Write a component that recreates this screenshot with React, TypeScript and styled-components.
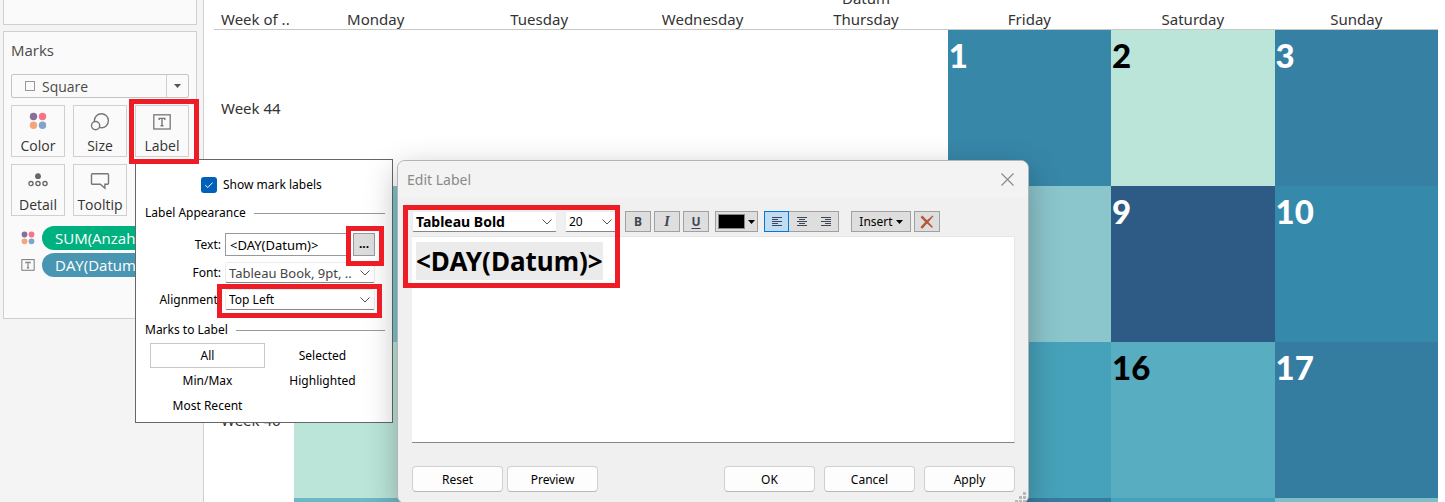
import React from "react";
import styled, { createGlobalStyle, css } from "styled-components";

const GlobalStyle = createGlobalStyle`
  *, *::before, *::after { box-sizing: border-box; }
  html, body { margin: 0; }
  body { font-family: "Noto Sans", sans-serif; font-size: 12px; color: #000; background: #fff; overflow: hidden; }
  button, input, select { font: inherit; color: inherit; margin: 0; }
`;

const Workspace = styled.div`
  position: relative;
  display: flex;
  height: 100vh;
  overflow: hidden;
`;

/* ---------- side bar ---------- */

const Sidebar = styled.aside`
  flex: none;
  width: 204px;
  padding: 0 6px 0 3px;
  background: #f4f4f4;
  border-right: 1px solid #d0d0d0;
  font-family: "Open Sans", sans-serif;
  font-size: 14px;
  color: #333;
`;

const Card = styled.section`
  border: 1px solid #d0d0d0;
  background: #fafafa;
`;

const FiltersCard = styled(Card)`
  height: 25px;
  border-top: 0;
`;

const MarksCard = styled(Card)`
  height: 288px;
  margin-top: 6px;
  padding: 8px 7px;
`;

const CardTitle = styled.h2`
  margin: 0 0 14px;
  font-size: 15px;
  line-height: 20px;
  font-weight: 400;
  color: #4a4a4a;
`;

const MarkType = styled.div`
  display: flex;
  align-items: center;
  position: relative;
  height: 24px;
  border: 1px solid #c4c4c4;
  border-radius: 2px;
  background: #fafafa;

  svg { position: absolute; pointer-events: none; }
  svg:first-of-type { left: 13px; }
  svg:last-of-type { right: 0; }
`;

const MarkTypeSelect = styled.select`
  flex: 1;
  height: 22px;
  padding: 0 30px;
  border: 0;
  background: none;
  appearance: none;
  color: #4a4a4a;
`;

const MarkGrid = styled.div`
  display: grid;
  grid-template-columns: repeat(3, 1fr);
  gap: 7px 8px;
  margin-top: 7px;
`;

const MarkCell = styled.div`
  position: relative;
`;

const MarkButton = styled.button`
  display: flex;
  flex-direction: column;
  align-items: center;
  justify-content: space-between;
  width: 100%;
  height: 52px;
  padding: 6px 0 0;
  border: 1px solid #d0d0d0;
  background: #fafafa;
  line-height: 20px;
`;

const ShelfRow = styled.div`
  display: flex;
  align-items: center;
  gap: 7px;
  height: 24px;
  margin: 10px 0 3px;
  padding-left: 10px;

  & + & { margin-top: 0; }
`;

const Pill = styled.button<{ $color: string }>`
  flex: 1;
  min-width: 0;
  height: 24px;
  padding: 0 13px;
  border: 0;
  border-radius: 12px;
  background: ${(p) => p.$color};
  color: #fff;
  font-size: 15px;
  line-height: 24px;
  text-align: left;
  white-space: nowrap;
  overflow: hidden;
`;

/* ---------- calendar sheet ---------- */

const Sheet = styled.main`
  flex: 1;
  min-width: 0;
  padding: 0 7px 0 10px;
  overflow: hidden;
`;

const Calendar = styled.table`
  width: 100%;
  margin-top: -13px;
  border-collapse: collapse;
  table-layout: fixed;
  font-size: 15px;
  line-height: 20px;
  color: #333;
`;

const WeekColumn = styled.col`
  width: 80px;
`;

const HeadCell = styled.th`
  height: 22px;
  padding: 0;
  font-weight: 400;
  text-align: center;
`;

const DayHead = styled(HeadCell)`
  height: 20px;
  border-bottom: 1px solid #c8c8c8;
`;

const WeekHead = styled(DayHead)`
  padding-left: 7px;
  text-align: left;
  white-space: nowrap;
`;

const WeekCell = styled.th`
  height: 156px;
  padding: 0 0 0 7px;
  font-weight: 400;
  text-align: left;
`;

const DayCell = styled.td<{ $fill?: string; $dark?: boolean }>`
  padding: 6px 1px;
  vertical-align: top;
  background: ${(p) => p.$fill ?? "transparent"};
  color: ${(p) => (p.$dark ? "#000" : "#fff")};
  font-family: Lato, sans-serif;
  font-size: 33px;
  font-weight: 900;
  line-height: 38px;
`;

/* ---------- shared overlay parts ---------- */

const Marker = styled.div<{ $edges: string }>`
  position: absolute;
  inset: ${(p) => p.$edges};
  border: 5px solid #ee1c24;
  z-index: 5;
  pointer-events: none;
`;

const Picker = styled.div<{ $width: string }>`
  position: relative;
  width: ${(p) => p.$width};

  svg { position: absolute; right: 5px; top: 8px; pointer-events: none; }
`;

const PickerSelect = styled.select<{ $bold?: boolean; $muted?: boolean }>`
  display: block;
  width: 100%;
  height: 21px;
  padding: 0 3px;
  border: 1px solid #ececec;
  border-bottom-color: #868686;
  border-radius: 2px;
  background: #fff;
  appearance: none;
  ${(p) => p.$bold && css`font-size: 14px; font-weight: 700;`}
  ${(p) => p.$muted && css`font-size: 13px; color: #444;`}
`;

/* ---------- label popup ---------- */

const Popup = styled.section`
  position: absolute;
  left: 135px;
  top: 159px;
  width: 258px;
  height: 264px;
  padding: 17px 7px 0 9px;
  border: 1px solid #666;
  background: #fff;
  line-height: 16px;
`;

const CheckLabel = styled.label`
  display: flex;
  align-items: center;
  gap: 6px;
  height: 16px;
  margin-left: 56px;
`;

const CheckBox = styled.input`
  appearance: none;
  width: 16px;
  height: 16px;
  border-radius: 3px;
  background: #005fb8;
`;

const CheckWrap = styled.span`
  position: relative;
  display: flex;

  svg { position: absolute; left: 4px; top: 4px; pointer-events: none; }
`;

const GroupTitle = styled.h3`
  display: flex;
  align-items: center;
  gap: 8px;
  margin: 0;
  padding-top: 12px;
  font-size: 12px;
  font-weight: 400;

  &::after { content: ""; flex: 1; height: 1px; background: #999; }
`;

const Fields = styled.div`
  display: grid;
  grid-template-columns: 76px 150px;
  align-items: center;
  gap: 6px 4px;
  margin-top: 12px;
`;

const FieldLabel = styled.label`
  text-align: right;
`;

const TextField = styled.div`
  display: flex;
  gap: 5px;
  height: 23px;
`;

const TextInput = styled.input`
  flex: 1;
  min-width: 0;
  padding: 0 4px;
  border: 1px solid #999;
  background: #fff;
  font-size: 13px;
`;

const MoreButton = styled.button`
  width: 22px;
  height: 23px;
  padding: 0 0 2px;
  border: 1px solid #999;
  background: #dcdcdc;
  font-weight: 700;
`;

const MoreWrap = styled.div`
  position: relative;
`;

const ChoiceGrid = styled.div`
  display: grid;
  grid-template-columns: 115px 115px;
  margin: 5px 0 0 5px;
`;

const Choice = styled.button<{ $active?: boolean }>`
  height: 25px;
  padding: 0;
  border: 1px solid ${(p) => (p.$active ? "#c8c8c8" : "transparent")};
  background: none;
`;

/* ---------- edit dialog ---------- */

const Dialog = styled.section`
  position: absolute;
  left: 397px;
  top: 160px;
  width: 632px;
  height: 344px;
  border: 1px solid #b4b4b4;
  border-radius: 8px;
  background: #f0f0f0;
  box-shadow: 0 10px 32px rgba(0, 0, 0, 0.28);
`;

const TitleBar = styled.header`
  display: flex;
  align-items: center;
  justify-content: space-between;
  height: 37px;
  padding: 0 14px 0 9px;
  border-radius: 7px 7px 0 0;
  background: #f3f3f3;
  color: #8a8a8a;
`;

const DialogTitle = styled.h1`
  margin: 0;
  font-size: 14px;
  font-weight: 400;
`;

const CloseButton = styled.button`
  display: flex;
  padding: 0;
  border: 0;
  background: none;
`;

const DialogBody = styled.div`
  padding: 13px 13px 0 14px;
`;

const Toolbar = styled.div`
  display: flex;
  height: 21px;
`;

const ToolGroup = styled.div<{ $before: number; $gap?: number }>`
  display: flex;
  gap: ${(p) => p.$gap ?? 0}px;
  margin-left: ${(p) => p.$before}px;
`;

const ToolButton = styled.button<{ $width: number }>`
  display: flex;
  align-items: center;
  justify-content: center;
  gap: 3px;
  width: ${(p) => p.$width}px;
  height: 21px;
  padding: 0;
  border: 1px solid #a0a0a0;
  background: #dedede;
`;

const Glyph = styled.span<{ $kind: "bold" | "italic" | "underline" }>`
  color: #3c4657;
  font-weight: 700;
  ${(p) => p.$kind === "italic" && css`font-family: "Liberation Serif", serif; font-style: italic; font-size: 14px;`}
  ${(p) => p.$kind === "underline" && css`text-decoration: underline; text-underline-offset: 2px;`}
`;

const AlignButton = styled(ToolButton)<{ $active?: boolean }>`
  border-width: 1px 0;
  &:last-child { border-right-width: 1px; }
  ${(p) => p.$active && css`
    border: 1px solid #0078d7;
    background: #c0dcf3;
  `}
`;

const Swatch = styled.span`
  width: 27px;
  height: 15px;
  border: 1px solid #888;
  background: #000;
`;

const Editor = styled.div`
  height: 207px;
  margin-top: 4px;
  padding: 5px 4px;
  border: 1px solid #e6e6e6;
  border-left: 0;
  border-bottom-color: #868686;
  background: #fff;
  font-size: 26px;
  font-weight: 700;
  line-height: 38px;
  outline: 0;
`;

const Selection = styled.span`
  display: inline-block;
  background: #ebebeb;
`;

const Footer = styled.footer`
  display: flex;
  justify-content: space-between;
  margin-top: 23px;
`;

const ButtonRow = styled.div<{ $gap: number }>`
  display: flex;
  gap: ${(p) => p.$gap}px;
`;

const DialogButton = styled.button`
  width: 91px;
  height: 26px;
  padding: 0;
  border: 1px solid #d0d0d0;
  border-bottom-color: #b8b8b8;
  border-radius: 4px;
  background: #fdfdfd;
`;

const Grip = styled.svg`
  position: absolute;
  right: 2px;
  bottom: 0;
`;

/* ---------- icons ---------- */

const Chevron = () => (
  <svg width="10" height="6" viewBox="0 0 10 6" fill="none" stroke="#555">
    <path d="M.5.5 5 5 9.5.5" />
  </svg>
);

const Caret = () => (
  <svg width="7" height="4" viewBox="0 0 7 4"><path d="M0 0h7L3.5 4z" fill="#000" /></svg>
);

const ColorIcon = ({ size }: { size: number }) => (
  <svg width={size} height={size} viewBox="0 0 18 18">
    <circle cx="4.5" cy="4.5" r="3.7" fill="#86709a" />
    <circle cx="13.5" cy="4.5" r="3.7" fill="#fb7185" />
    <circle cx="4.5" cy="13.3" r="3.7" fill="#f5a57a" />
    <circle cx="13.5" cy="13.3" r="3.7" fill="#7fa3cb" />
  </svg>
);

const SizeIcon = () => (
  <svg width="20" height="20" viewBox="0 0 20 20" fill="none" stroke="#777" strokeWidth="1.4">
    <circle cx="11.4" cy="8.8" r="7" />
    <circle cx="5.6" cy="13.6" r="4.1" fill="#fafafa" />
  </svg>
);

const LabelIcon = ({ width }: { width: number }) => (
  <svg width={width} height={width === 18 ? 20 : 12} viewBox="0 0 18 16" fill="none" stroke="#777" strokeWidth="1.3">
    <rect x=".8" y=".8" width="16.4" height="14.2" />
    <path d="M6.2 6V4.4h5.6V6M9 4.4v7.4M7.5 11.8h3" strokeWidth="1.4" />
  </svg>
);

const DetailIcon = () => (
  <svg width="20" height="18" viewBox="0 0 20 18" fill="none" stroke="#666" strokeWidth="1.3">
    <circle cx="10" cy="5.2" r="2.9" fill="#666" stroke="none" />
    <circle cx="3" cy="12.6" r="2.1" />
    <circle cx="10" cy="12.6" r="2.1" />
    <circle cx="17" cy="12.6" r="2.1" />
  </svg>
);

const TooltipIcon = () => (
  <svg width="20" height="20" viewBox="0 0 20 20" fill="none" stroke="#777" strokeWidth="1.4">
    <path d="M2.5 2.7h15a1 1 0 0 1 1 1v8.6a1 1 0 0 1-1 1h-2.6v4l-4.6-4H2.5a1 1 0 0 1-1-1V3.7a1 1 0 0 1 1-1z" />
  </svg>
);

const AlignIcon = ({ side }: { side: "left" | "center" | "right" }) => {
  const widths = [10, 6, 10, 6, 10];
  return (
    <svg width="10" height="9" viewBox="0 0 10 9" fill="#3c4657">
      {widths.map((w, i) => (
        <rect key={i} x={side === "left" ? 0 : side === "right" ? 10 - w : (10 - w) / 2} y={i * 2} width={w} height="1" />
      ))}
    </svg>
  );
};

/* ---------- data ---------- */

type Day = { fill: string; day?: string; dark?: boolean } | null;

const DAYS = ["Monday", "Tuesday", "Wednesday", "Thursday", "Friday", "Saturday", "Sunday"];

const WEEKS: { name: string; days: Day[] }[] = [
  {
    name: "Week 44",
    days: [null, null, null, null, { fill: "#3787a9", day: "1" }, { fill: "#bbe5d9", day: "2", dark: true }, { fill: "#3580a3", day: "3" }],
  },
  {
    name: "Week 45",
    days: [
      { fill: "#7fc3cc" }, { fill: "#7fc3cc" }, { fill: "#7fc3cc" }, { fill: "#7fc3cc" }, { fill: "#8bc6cd" },
      { fill: "#2d5b86", day: "9" }, { fill: "#3589aa", day: "10" },
    ],
  },
  {
    name: "Week 46",
    days: [
      { fill: "#bbe5d9" }, { fill: "#59adc1" }, { fill: "#59adc1" }, { fill: "#59adc1" }, { fill: "#46a2ba" },
      { fill: "#59adc1", day: "16", dark: true }, { fill: "#347ca0", day: "17" },
    ],
  },
  {
    name: "Week 47",
    days: [
      { fill: "#6db7c6" }, { fill: "#6db7c6" }, { fill: "#6db7c6" }, { fill: "#6db7c6" }, { fill: "#347ca0" },
      { fill: "#46a2ba" }, { fill: "#7cbfc8" },
    ],
  },
];

const MARKS = [
  { name: "Color", icon: <ColorIcon size={18} /> },
  { name: "Size", icon: <SizeIcon /> },
  { name: "Label", icon: <LabelIcon width={18} />, marked: true },
  { name: "Detail", icon: <DetailIcon /> },
  { name: "Tooltip", icon: <TooltipIcon /> },
];

const CHOICES = ["All", "Selected", "Min/Max", "Highlighted", "Most Recent"];

/* ---------- sections ---------- */

const MarksPanel = () => (
  <Sidebar>
    <FiltersCard />
    <MarksCard>
      <CardTitle>Marks</CardTitle>
      <MarkType>
        <svg width="10" height="10" viewBox="0 0 10 10"><rect x=".5" y=".5" width="9" height="9" fill="none" stroke="#999" /></svg>
        <MarkTypeSelect aria-label="Mark type"><option>Square</option></MarkTypeSelect>
        <svg width="22" height="22" viewBox="0 0 22 22">
          <path d="M.5 0v22" stroke="#d0d0d0" />
          <path d="M8 9h7l-3.5 4z" fill="#555" />
        </svg>
      </MarkType>
      <MarkGrid>
        {MARKS.map((m) => (
          <MarkCell key={m.name}>
            <MarkButton>{m.icon}{m.name}</MarkButton>
            {m.marked && <Marker $edges="-6px -10px -7px -6px" />}
          </MarkCell>
        ))}
      </MarkGrid>
      <ShelfRow><ColorIcon size={14} /><Pill $color="#00b180">SUM(Anzahl)</Pill></ShelfRow>
      <ShelfRow><LabelIcon width={14} /><Pill $color="#4996b2">DAY(Datum)</Pill></ShelfRow>
    </MarksCard>
  </Sidebar>
);

const CalendarSheet = () => (
  <Sheet>
    <Calendar>
      <colgroup>
        <WeekColumn />
        {DAYS.map((d) => <col key={d} />)}
      </colgroup>
      <thead>
        <tr><HeadCell /><HeadCell colSpan={7}>Datum</HeadCell></tr>
        <tr>
          <WeekHead scope="col">Week of ..</WeekHead>
          {DAYS.map((d) => <DayHead scope="col" key={d}>{d}</DayHead>)}
        </tr>
      </thead>
      <tbody>
        {WEEKS.map((w) => (
          <tr key={w.name}>
            <WeekCell scope="row">{w.name}</WeekCell>
            {w.days.map((d, i) => <DayCell key={i} $fill={d?.fill} $dark={d?.dark}>{d?.day}</DayCell>)}
          </tr>
        ))}
      </tbody>
    </Calendar>
  </Sheet>
);

const LabelPopup = () => (
  <Popup>
    <CheckLabel>
      <CheckWrap>
        <CheckBox type="checkbox" defaultChecked />
        <svg width="8" height="8" viewBox="0 0 8 8" fill="none" stroke="#fff"><path d="M.3 4.2 2.8 6.5 7.7 1.5" /></svg>
      </CheckWrap>
      Show mark labels
    </CheckLabel>
    <GroupTitle>Label Appearance</GroupTitle>
    <Fields>
      <FieldLabel htmlFor="label-text">Text:</FieldLabel>
      <TextField>
        <TextInput id="label-text" defaultValue="<DAY(Datum)>" />
        <MoreWrap>
          <MoreButton aria-label="Edit text">...</MoreButton>
          <Marker $edges="-7px -9px -10px -7px" />
        </MoreWrap>
      </TextField>
      <FieldLabel htmlFor="label-font">Font:</FieldLabel>
      <Picker $width="100%">
        <PickerSelect id="label-font" $muted><option>Tableau Book, 9pt, ..</option></PickerSelect>
        <Chevron />
      </Picker>
      <FieldLabel htmlFor="label-align">Alignment:</FieldLabel>
      <Picker $width="100%">
        <PickerSelect id="label-align"><option>Top Left</option></PickerSelect>
        <Chevron />
        <Marker $edges="-5px -7px -8px -8px" />
      </Picker>
    </Fields>
    <GroupTitle>Marks to Label</GroupTitle>
    <ChoiceGrid>
      {CHOICES.map((c, i) => <Choice key={c} $active={i === 0}>{c}</Choice>)}
    </ChoiceGrid>
  </Popup>
);

const EditDialog = () => (
  <Dialog role="dialog" aria-labelledby="edit-title">
    <TitleBar>
      <DialogTitle id="edit-title">Edit Label</DialogTitle>
      <CloseButton aria-label="Close">
        <svg width="13" height="13" viewBox="0 0 13 13" stroke="#8a8a8a" strokeWidth="1.2"><path d="M.5.5l12 12M12.5.5l-12 12" /></svg>
      </CloseButton>
    </TitleBar>
    <DialogBody>
      <Toolbar>
        <Picker $width="145px">
          <PickerSelect aria-label="Font" $bold><option>Tableau Bold</option></PickerSelect>
          <Chevron />
        </Picker>
        <ToolGroup $before={8}>
          <Picker $width="52px">
            <PickerSelect aria-label="Font size"><option>20</option></PickerSelect>
            <Chevron />
          </Picker>
        </ToolGroup>
        <ToolGroup $before={8} $gap={3}>
          <ToolButton $width={26}><Glyph $kind="bold">B</Glyph></ToolButton>
          <ToolButton $width={26}><Glyph $kind="italic">I</Glyph></ToolButton>
          <ToolButton $width={26}><Glyph $kind="underline">U</Glyph></ToolButton>
        </ToolGroup>
        <ToolGroup $before={6}>
          <ToolButton $width={43} aria-label="Text color"><Swatch /><Caret /></ToolButton>
        </ToolGroup>
        <ToolGroup $before={6}>
          <AlignButton $width={25} $active aria-label="Align left"><AlignIcon side="left" /></AlignButton>
          <AlignButton $width={25} aria-label="Align center"><AlignIcon side="center" /></AlignButton>
          <AlignButton $width={25} aria-label="Align right"><AlignIcon side="right" /></AlignButton>
        </ToolGroup>
        <ToolGroup $before={12} $gap={3}>
          <ToolButton $width={60}>Insert<Caret /></ToolButton>
          <ToolButton $width={26} aria-label="Clear">
            <svg width="14" height="14" viewBox="0 0 14 14" fill="#b8563a">
              <path d="M2.3.6 7 5.2 12.6.6l.8.6L8.5 6.9l4.5 5.1-1.2.8L7 8.4 2.6 13.4.8 13 .9 11.6 5.2 6.9.5 2.2z" />
            </svg>
          </ToolButton>
        </ToolGroup>
      </Toolbar>
      <Editor role="textbox" aria-label="Label text" contentEditable suppressContentEditableWarning spellCheck={false}>
        <Selection>&lt;DAY(Datum)&gt;</Selection>
      </Editor>
      <Footer>
        <ButtonRow $gap={4}>
          <DialogButton>Reset</DialogButton>
          <DialogButton>Preview</DialogButton>
        </ButtonRow>
        <ButtonRow $gap={9}>
          <DialogButton>OK</DialogButton>
          <DialogButton>Cancel</DialogButton>
          <DialogButton>Apply</DialogButton>
        </ButtonRow>
      </Footer>
    </DialogBody>
    <Marker $edges="44px 408px 215px 5px" />
    <Grip width="11" height="11" viewBox="0 0 11 11" fill="#b8b8b8">
      <path d="M8 0h3v3H8zM8 4h3v3H8zM4 4h3v3H4zM8 8h3v3H8zM4 8h3v3H4zM0 8h3v3H0z" />
    </Grip>
  </Dialog>
);

export default function App() {
  return (
    <>
      <GlobalStyle />
      <Workspace>
        <MarksPanel />
        <CalendarSheet />
        <LabelPopup />
        <EditDialog />
      </Workspace>
    </>
  );
}
